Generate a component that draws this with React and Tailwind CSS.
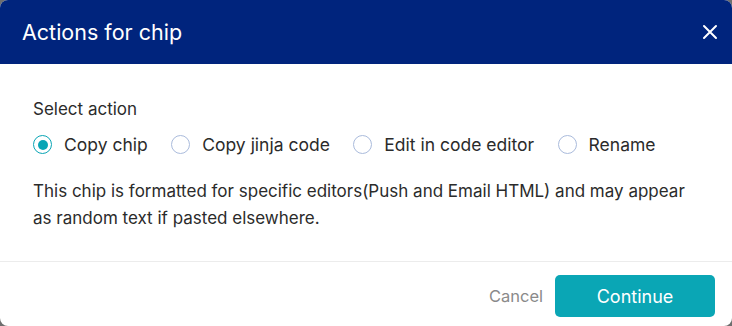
import React from "react";

function Radio({ checked, label }) {
  return (
    <label className="flex items-center gap-[12px]">
      <span
        className={`flex h-[19px] w-[19px] items-center justify-center rounded-full border ${
          checked ? "border-[#0aa5b5]" : "border-[#aabbdc]"
        }`}
      >
        {checked && <span className="h-[10px] w-[10px] rounded-full bg-[#0aa5b5]" />}
      </span>
      <span className="text-[17.5px] text-[#2b2b2b]">{label}</span>
    </label>
  );
}

export default function App() {
  return (
    <div className="h-[326px] w-[732px] bg-[#6e6e6e]" style={{ fontFamily: "Inter, 'Open Sans', sans-serif" }}>
      <div className="flex h-full w-full flex-col overflow-hidden rounded-[8px] bg-white">
        <div className="flex h-[64px] items-center justify-between bg-[#00247d] pl-[22px] pr-[14px]">
          <h1 className="text-[21.5px] font-normal text-white">Actions for chip</h1>
          <svg width="16" height="16" viewBox="0 0 16 16" className="text-white">
            <path d="M2 2 L14 14 M14 2 L2 14" stroke="currentColor" strokeWidth="2" strokeLinecap="round" />
          </svg>
        </div>
        <div className="flex flex-1 flex-col px-[33px] pt-[33px]">
          <div className="text-[17px] text-[#2b2b2b]">Select action</div>
          <div className="mt-[9px] flex items-center gap-[23.5px]">
            <Radio checked label="Copy chip" />
            <Radio label="Copy jinja code" />
            <Radio label="Edit in code editor" />
            <Radio label="Rename" />
          </div>
          <p className="mt-[20px] text-[17px] leading-[27px] text-[#2b2b2b]">
            This chip is formatted for specific editors(Push and Email HTML) and may appear as random text if pasted elsewhere.
          </p>
        </div>
        <div className="flex h-[65px] items-center justify-end gap-[12px] border-t border-[#ececec] pr-[17px] pt-[4px]">
          <button className="text-[16.5px] text-[#8a8a8a]">Cancel</button>
          <button className="h-[42px] w-[160px] rounded-[5px] bg-[#0aa6b5] text-[18px] text-white">Continue</button>
        </div>
      </div>
    </div>
  );
}
